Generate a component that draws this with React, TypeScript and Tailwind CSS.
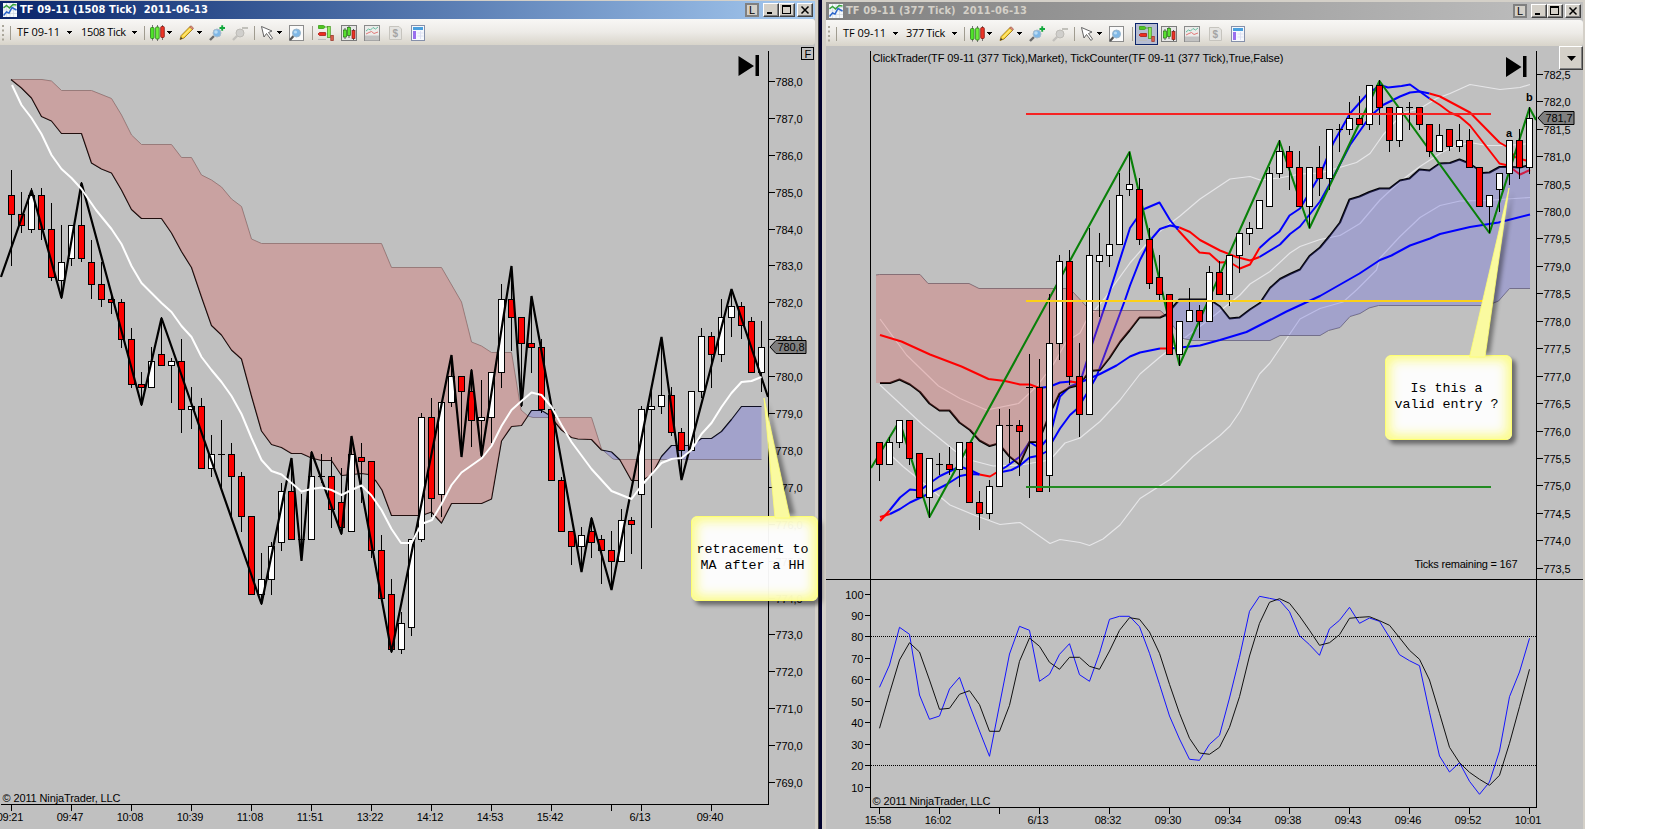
import React from "react";
import clsx from "clsx";

// [high, body top, body bottom, low, colour] in chart pixels
type Candle = [number, number, number, number, "r" | "w"];
type Tick = [number, string];

const leftCandles: Candle[] = [
  [170, 195.5, 214.5, 266, "r"], [192, 214.5, 225.5, 233, "r"], [188, 195.5, 229.5, 233, "w"],
  [188, 195.5, 229.5, 240, "r"], [203, 229.5, 277.5, 281, "r"], [225, 262.5, 280.5, 299, "w"],
  [225, 225.5, 258.5, 266, "w"], [182, 225.5, 258.5, 262, "r"], [240, 262.5, 284.5, 299, "r"],
  [262, 284.5, 299.5, 307, "r"], [292, 299.5, 302.5, 314, "r"], [299, 302.5, 339.5, 348, "r"],
  [328, 339.5, 384.5, 388, "r"], [372, 384.5, 387.5, 406, "r"], [347, 361.5, 387.5, 388, "w"],
  [317, 354.5, 365.5, 366, "r"], [358, 361.5, 365.5, 403, "w"], [339, 361.5, 409.5, 433, "r"],
  [387, 406.5, 409.5, 429, "w"], [398, 406.5, 468.5, 469, "r"], [435, 454.5, 468.5, 477, "w"],
  [420, 454.5, 454.5, 490, "w"], [443, 454.5, 476.5, 517, "r"], [472, 476.5, 516.5, 532, "r"],
  [516, 516.5, 594.5, 595, "r"], [553, 579.5, 594.5, 605, "w"], [542, 546.5, 579.5, 595, "w"],
  [483, 491.5, 542.5, 551, "w"], [458, 491.5, 539.5, 540, "r"], [494, 539.5, 539.5, 561, "w"],
  [451, 476.5, 539.5, 540, "w"], [454, 476.5, 476.5, 483, "w"], [457, 476.5, 509.5, 528, "r"],
  [468, 502.5, 527.5, 535, "r"], [436, 454.5, 531.5, 532, "w"], [443, 457.5, 461.5, 503, "r"],
  [461, 461.5, 550.5, 558, "r"], [535, 550.5, 598.5, 599, "r"], [579, 594.5, 649.5, 653, "r"],
  [612, 623.5, 649.5, 654, "w"], [539, 539.5, 627.5, 636, "w"], [413, 417.5, 539.5, 542, "w"],
  [398, 417.5, 498.5, 517, "r"], [402, 402.5, 494.5, 517, "w"], [355, 376.5, 402.5, 407, "w"],
  [376, 376.5, 391.5, 457, "r"], [369, 391.5, 420.5, 447, "r"], [380, 417.5, 420.5, 457, "w"],
  [372, 372.5, 417.5, 443, "w"], [284, 299.5, 372.5, 388, "w"], [266, 299.5, 317.5, 351, "r"],
  [317, 317.5, 343.5, 407, "r"], [296, 343.5, 347.5, 373, "r"], [339, 347.5, 409.5, 413, "r"],
  [409, 409.5, 480.5, 481, "r"], [477, 480.5, 531.5, 532, "r"], [531, 531.5, 546.5, 565, "r"],
  [527, 535.5, 546.5, 572, "w"], [517, 531.5, 542.5, 558, "r"], [535, 539.5, 550.5, 584, "r"],
  [531, 550.5, 561.5, 590, "r"], [509, 520.5, 561.5, 562, "w"], [517, 520.5, 524.5, 554, "r"],
  [406, 409.5, 494.5, 569, "w"], [387, 406.5, 409.5, 528, "w"], [337, 395.5, 406.5, 414, "w"],
  [387, 395.5, 432.5, 436, "r"], [428, 432.5, 450.5, 480, "r"], [391, 391.5, 450.5, 451, "w"],
  [328, 336.5, 391.5, 398, "w"], [332, 336.5, 354.5, 388, "r"], [299, 317.5, 354.5, 362, "w"],
  [289, 306.5, 317.5, 337, "w"], [302, 306.5, 325.5, 339, "r"], [317, 321.5, 372.5, 373, "r"],
  [321, 347.5, 372.5, 392, "w"],
];

const rightCandles: Candle[] = [
  [442, 442.5, 464.5, 481, "r"], [437, 442.5, 464.5, 465, "w"], [420, 420.5, 442.5, 448, "w"],
  [420, 420.5, 458.5, 465, "r"], [453, 453.5, 497.5, 498, "r"], [458, 458.5, 497.5, 518, "w"],
  [453, 464.5, 464.5, 475, "w"], [447, 464.5, 469.5, 475, "r"], [442, 442.5, 469.5, 487, "w"],
  [442, 442.5, 502.5, 503, "r"], [491, 502.5, 513.5, 530, "r"], [480, 486.5, 513.5, 519, "w"],
  [409, 425.5, 486.5, 487, "w"], [409, 425.5, 425.5, 463, "w"], [420, 425.5, 431.5, 476, "r"],
  [354, 387.5, 387.5, 498, "w"], [359, 387.5, 491.5, 492, "r"], [294, 343.5, 475.5, 492, "w"],
  [255, 261.5, 343.5, 360, "w"], [250, 261.5, 376.5, 385, "r"], [343, 376.5, 414.5, 437, "r"],
  [228, 255.5, 414.5, 415, "w"], [233, 255.5, 261.5, 317, "w"], [200, 244.5, 255.5, 267, "w"],
  [173, 195.5, 244.5, 245, "w"], [152, 184.5, 189.5, 196, "w"], [178, 189.5, 239.5, 245, "r"],
  [228, 239.5, 283.5, 289, "r"], [255, 277.5, 294.5, 300, "r"], [294, 294.5, 354.5, 355, "r"],
  [321, 321.5, 354.5, 366, "w"], [288, 310.5, 321.5, 322, "w"], [305, 310.5, 321.5, 338, "r"],
  [266, 272.5, 321.5, 322, "w"], [261, 272.5, 294.5, 295, "r"], [255, 255.5, 294.5, 306, "w"],
  [233, 233.5, 255.5, 273, "w"], [222, 228.5, 233.5, 245, "w"], [200, 200.5, 228.5, 229, "w"],
  [167, 173.5, 206.5, 207, "w"], [140, 151.5, 173.5, 178, "w"], [146, 151.5, 167.5, 190, "r"],
  [151, 167.5, 206.5, 207, "r"], [167, 167.5, 206.5, 228, "w"], [146, 167.5, 178.5, 196, "r"],
  [129, 129.5, 178.5, 190, "w"], [124, 129.5, 129.5, 152, "w"], [102, 118.5, 129.5, 135, "w"],
  [96, 118.5, 124.5, 125, "r"], [85, 85.5, 124.5, 130, "w"], [80, 85.5, 107.5, 125, "r"],
  [107, 107.5, 140.5, 152, "r"], [107, 107.5, 140.5, 147, "w"], [102, 107.5, 107.5, 130, "w"],
  [107, 107.5, 124.5, 130, "r"], [124, 124.5, 151.5, 157, "r"], [124, 135.5, 151.5, 152, "w"],
  [129, 129.5, 146.5, 151, "r"], [124, 140.5, 146.5, 152, "w"], [129, 140.5, 167.5, 168, "r"],
  [167, 167.5, 206.5, 207, "r"], [195, 195.5, 206.5, 233, "w"], [173, 173.5, 189.5, 212, "w"],
  [140, 140.5, 173.5, 185, "w"], [129, 140.5, 167.5, 179, "r"], [107, 118.5, 167.5, 174, "w"],
];

const leftZigzag =
  "1,277 31.5,190 61.5,298 81.5,183 141.5,405 161.5,318 261.5,604 291.5,458 301.5,561 311.5,452 341.5,534 351.5,436 391.5,652 451.5,355 461.5,457 471.5,370 481.5,456 511.5,266 521.5,406 531.5,296 581.5,572 591.5,518 611.5,590 661.5,337 681.5,480 731.5,289 763,382 768,397";
const leftAverage =
  "12,85 21.5,105 31.5,118 41.5,134 51.5,155 61.5,169 71.5,178 81.5,189 96,210 111.5,229 121.5,244 131.5,266 141.5,283 151.5,293 161.5,303 171.5,312 181.5,326 191.5,337 201.5,357 211.5,370 221.5,382 231.5,396 241.5,414 251.5,438 261.5,460 271.5,471 281.5,474.5 291.5,483 301.5,491.5 311.5,489 321.5,487.5 331.5,490 341.5,495 351.5,490 361.5,485.5 371.5,495.5 381.5,510 391.5,529 401,543 411.5,543 421.5,524 432,520 441.5,504 451.5,485 461.5,472.5 482,458 491.5,446 501.5,426 511.5,410 521.5,401 531.5,392.5 541.5,395 551.5,407 561.5,425 571.5,442 591.5,469 611.5,491 631.5,499 642,485 661.5,463 671.5,459 681.5,458 691.5,450 701.5,434 711.5,423 721.5,407 731.5,393 741.5,382 751.5,381 761.5,377";
const leftSpanA =
  "11,79.5 42,79.5 51.5,81 61.5,90.5 91.5,90.5 111.5,98.5 121.5,115 131.5,135 141.5,144.5 171.5,144.5 181.5,157.5 191.5,157.5 201.5,175 211.5,180 221.5,187 231.5,199 241.5,206.5 251.5,239 261.5,243.5 381.5,243.5 391.5,267.5 441.5,267.5 461.5,302 471.5,342 481.5,346 491.5,352.5 511.5,352.5 521,410 528,416 533,417.5 591.5,417.5 601.5,449 613,459 616,459.5 761.5,459.5";
const leftSpanB =
  "11,79.5 21.5,88 31.5,98 41.5,116.5 51.5,121 61.5,133.5 81.5,133.5 91.5,163 101.5,169 111.5,173 121.5,190 131.5,209.5 141.5,218.5 161.5,218.5 171.5,233 181.5,251.5 191.5,267.5 201.5,297 211.5,325.5 221.5,335 231.5,350 241.5,359 251.5,396 261.5,431 271.5,444.5 281.5,447.5 291.5,453.5 301.5,453.5 311.5,458 321.5,460.5 331.5,460.5 341.5,475.5 361.5,473.5 369,474.5 376,481 382,490 391.5,515.5 421.5,515.5 431.5,512 441.5,523 451.5,503.5 481.5,503.5 491.5,499 501.5,441 511.5,426.5 521.5,425.5 531.5,410.5 541.5,410.5 549,415 561.5,430 571.5,437.5 578,439 591.5,439.5 601.5,450 611.5,452 620,460 631.5,480.5 642,480.5 651.5,475 661.5,456.5 671.5,445.5 691.5,445.5 701.5,438.5 711.5,438.5 721.5,431.5 731.5,419.5 741.5,406.5 761.5,406.5";

const rightSpanA =
  "876,275 879.5,274.5 920,274.5 928,283.5 969,283.5 979,288.5 1066,288.5 1073,292 1086,306 1093,310.5 1160,310.5 1163,313 1183,338.5 1193,340.5 1270,340.5 1280,335.5 1320,335.5 1328.5,330.5 1340,327.5 1350,316.5 1360,313.5 1369,308 1378.5,305.5 1487,305.5 1498.5,301 1509.5,288.5 1530,288.5";
const rightSpanB =
  "880,383 890,383 899.5,379.5 910,384.5 920,392 929.5,403.5 939.5,410.5 949.5,410.5 959.5,422.5 970,430 979.5,440.5 989.5,446 998.5,443.5 1009.5,456.5 1019.5,464.5 1029.5,442 1038.5,442 1050,413 1059.5,393.5 1069.5,387.5 1079.5,385 1089.5,371 1100,370 1109.5,358 1120,342 1129.5,330.5 1139.5,317.5 1160,317.5 1166.5,314.5 1173.5,306.5 1179.5,299.5 1209.5,299.5 1220,306.5 1229.5,318.5 1239.5,317.5 1250,309.5 1260,303 1270,288 1280,279 1290,274 1300,269.5 1309.5,256 1320,247.5 1330,235.5 1340,222.5 1349.5,199.5 1359.5,196.5 1369.5,192 1379.5,188.5 1389.5,188.5 1400,180.5 1409.5,178.5 1419.5,169.5 1429.5,170.5 1439.5,163.5 1450,163 1459.5,159.5 1469.5,163.5 1483,173 1489.5,172.5 1499.5,167 1509.5,167 1520,167.5 1530,165";
const rightZigzag =
  "871,468 899.5,421 929.5,517 1129.5,152 1179.5,365 1279.5,141 1309.5,228 1379.5,81 1489.5,233 1529.5,108 1536,120";

const bands = [
  "880,319 906.5,355 938.5,386 960,398.5 986.5,410 1018.5,403.5 1036.5,386.5 1053,365 1066.5,341.5 1080,333 1086.5,320 1105,298 1113,286.5 1130,263 1153,236.5 1180,216 1200,199 1230,179 1250,176.5 1260,180 1279.5,178 1300,174 1320,173 1343,166.5 1356.5,162.5 1370,153.5 1383,135 1403,113 1420,108.5 1436.5,98.5 1450,93.5 1470,84.5 1500,89.5 1520,87.5 1530,84.5",
  "880,385 923,425 955,451 970,460 993,466 1020,465 1050,460 1065,443 1080,438 1100,421.5 1120,400 1140,374 1160,357 1180,341.5 1213,316.5 1240,295 1250,284 1270,271.5 1290,253 1300,246.5 1320,239.5 1340,235.5 1360,223.5 1380,200 1400,181.5 1420,166.5 1440,153.5 1453,146.5 1470,142.5 1487,145.5 1507,145.5 1530,143.5",
  "887,451.5 903,466.5 935,492.5 950,505 976.5,516 1000,524.5 1020,522.5 1050,543.5 1060,539.5 1080,542.5 1089.5,545.5 1103,539 1120,525 1140,498.5 1170,479.5 1193,456.5 1220,435.5 1230,426 1240,411.5 1259.5,374 1270,363 1300,319 1320,308.5 1343,302 1356.5,290 1376.5,270 1380,258 1400,236.5 1420,217.5 1440,205.5 1460,201 1487,200.5 1507,199 1530,197.5",
];

// moving averages change colour with their slope
const slowAverage: [string, string][] = [
  ["#f00", "880,335 901.5,341.5 930,354.5 961.5,366.5 988.5,379 1005,381 1020,384.5 1030,384.5 1039.5,388"],
  ["#00f", "1039.5,388 1050,386.5 1060,382.5 1071.5,381.5"],
  ["#f00", "1070,381.5 1081,383"],
  ["#00f", "1080,382.5 1100,374 1116.5,365.5 1130,356.5 1140,352.5 1160,348.5"],
  ["#f00", "1160,348.5 1170,348.5"],
  ["#00f", "1170,348.5 1200,345.5 1220,340 1246.5,332 1270,320 1286.5,311.5 1320,296 1359.5,273.5 1380,260 1391.5,255.5 1410,245.5 1430,238.5 1440,234 1470,227 1498.5,222.5 1530,214.5"],
];
const fastAverages: [string, string][] = [
  ["#f00", "880,521 889.5,510.5"],
  ["#00f", "889.5,510.5 900,497.5 910,489.5 920,490.5 930,483 940,476 960,466.5 970,470 979.5,474.5"],
  ["#f00", "979.5,474.5 990,476.5 996.5,472.5"],
  ["#00f", "996.5,472.5 1006.5,466.5 1019.5,457 1029.5,442 1039.5,448 1050,436 1060,396.5 1070,386.5 1080,382.5 1093,341.5 1107,300 1130,228 1143,209.5 1159.5,202.5 1170,220 1178,230"],
  ["#f00", "1178,230 1190,243 1199.5,252.5 1209.5,253.5 1219.5,262.5 1229.5,262 1240,268.5 1250,264.5 1259.5,248"],
  ["#00f", "1259.5,248 1270,238.5 1279.5,231.5 1289.5,215.5 1300,208.5 1320,175 1333,143.5 1350,113.5 1366.5,95 1380,85 1388,87.5 1401.5,86 1410,84.5 1429.5,98.5"],
  ["#f00", "1429.5,98.5 1440,105 1450,112.5 1459.5,116.5 1470,125.5 1499.5,163.5 1508,165.5 1520,174.5 1530,170"],
  ["#f00", "880,517 890,514"],
  ["#00f", "890,514 900,509 910,502.5 923,496.5 946.5,484.5 960,476 970,474 979.5,474.5"],
  ["#00f", "996.5,473 1011.5,470 1020,465.5 1029.5,457.5 1039.5,455.5 1046.5,451.5 1060,428.5 1070,415 1078,408 1086.5,394 1096.5,376.5 1125,300 1130,285.5 1140,260 1150,240.5 1160,229 1170,225.5 1179.5,227.5"],
  ["#f00", "1179.5,227.5 1190,232 1200,240 1220,250.5 1236.5,257 1250,260.5 1259.5,257"],
  ["#00f", "1259.5,257 1280,244.5 1290,234 1300,226.5 1320,201.5 1330,183.5 1350,145 1370,116.5 1383,105 1400,96.5 1410,92.5 1420,91.5 1429.5,93.5"],
  ["#f00", "1429.5,93.5 1440,96.5 1470,112.5 1499.5,142.5 1506.5,146.5 1515,157 1526,160.5 1530,161"],
];

const stochK = [
  687.3, 665, 627.3, 634.3, 695, 719.3, 716, 689, 677.3, 705, 731, 756.3, 705, 654, 626.3, 630.3, 681.3, 674.3,
  654.3, 643.7, 674.7, 681.3, 653.3, 619.3, 616.3, 616.3, 626.7, 653.3, 684.3, 716, 739, 759.3, 760.3, 744.3,
  735.3, 698, 657.3, 611.3, 596.3, 598.3, 600.3, 611.7, 635.7, 644.7, 655.3, 628.7, 620.3, 607.3, 623.3, 618,
  621.3, 637.3, 654.7, 660.7, 665.7, 712.3, 756, 772, 762.7, 781.3, 794.3, 782, 751, 696.7, 672, 638.3,
];
const stochD = [
  728.3, 693.3, 660, 642.7, 652, 680, 709.3, 708.3, 694.3, 690.7, 704.7, 731.3, 731.3, 705.3, 661.3, 638, 646.3,
  662.3, 669.3, 657.3, 657.3, 666.3, 669.3, 651, 630.3, 617.7, 619.3, 632, 653.3, 684.3, 713.3, 738.3, 753,
  754.3, 747.3, 727.3, 696.7, 656, 623.3, 602.3, 598.7, 603.3, 616, 630.3, 645.3, 642.7, 634.7, 618.3, 617.3,
  616.7, 620.7, 625.3, 637.7, 650.3, 659.3, 680, 713.3, 747.3, 762.7, 772.3, 779.3, 785.3, 775.3, 743.3,
  706.7, 669.3,
];

const leftTimes: Tick[] = [
  [11.5, "09:21"], [71.5, "09:47"], [131.5, "10:08"], [191.5, "10:39"], [251.5, "11:08"], [311.5, "11:51"],
  [371.5, "13:22"], [431.5, "14:12"], [491.5, "14:53"], [551.5, "15:42"], [611.5, ""], [641.5, "6/13"],
  [711.5, "09:40"],
];
const rightTimes: Tick[] = [
  [879.5, "15:58"], [939.5, "16:02"], [999.5, ""], [1039.5, "6/13"], [1109.5, "08:32"], [1169.5, "09:30"],
  [1229.5, "09:34"], [1289.5, "09:38"], [1349.5, "09:43"], [1409.5, "09:46"], [1469.5, "09:52"], [1529.5, "10:01"],
];
const stochTicks: Tick[] = [
  [594.5, "100"], [615.5, "90"], [636.5, "80"], [658.5, "70"], [679.5, "60"], [701.5, "50"], [722.5, "40"],
  [744.5, "30"], [765.5, "20"], [787.5, "10"],
];

const labelClass = "fill-black font-['Liberation_Sans',Arial,sans-serif] text-[11px]";

const parse = (pts: string) => pts.split(" ").map((p) => p.split(",").map(Number));

const valueAt = (pts: number[][], x: number) => {
  if (x <= pts[0][0]) return pts[0][1];
  for (let i = 1; i < pts.length; i++) {
    const [x0, y0] = pts[i - 1];
    const [x1, y1] = pts[i];
    if (x <= x1) return y0 + ((y1 - y0) * (x - x0)) / (x1 - x0);
  }
  return pts[pts.length - 1][1];
};

// Ichimoku cloud: red while span A is on top, blue when span B is
const Cloud = ({ a, b, from, to }: { a: string; b: string; from: number; to: number }) => {
  const spanA = parse(a);
  const spanB = parse(b);
  const top: string[] = [];
  const under: string[] = [];
  const over: string[] = [];
  for (let x = from; x <= to; x += 0.5) {
    const ya = valueAt(spanA, x);
    const yb = valueAt(spanB, x);
    top.push(`${x},${ya}`);
    under.unshift(`${x},${Math.max(ya, yb)}`);
    over.unshift(`${x},${Math.min(ya, yb)}`);
  }
  return (
    <g stroke="none">
      <polygon points={[...top, ...under].join(" ")} fill="rgba(222,92,89,0.3)" />
      <polygon points={[...top, ...over].join(" ")} fill="rgba(92,92,229,0.3)" />
    </g>
  );
};

const Line = ({ points, color, width = 1 }: { points: string; color: string; width?: number }) => (
  <polyline points={points} fill="none" stroke={color} strokeWidth={width} strokeLinejoin="round" />
);

const Candles = ({ data, start }: { data: Candle[]; start: number }) => (
  <g stroke="#000" shapeRendering="crispEdges">
    {data.map(([high, top, bottom, low, color], i) => {
      const x = start + i * 10;
      return (
        <g key={i}>
          <line x1={x} x2={x} y1={high} y2={low} />
          {top === bottom ? (
            <line x1={x - 3.5} x2={x + 3.5} y1={top} y2={top} />
          ) : (
            <rect x={x - 3} y={top} width={6} height={bottom - top} fill={color === "r" ? "#fc0000" : "#fff"} />
          )}
        </g>
      );
    })}
  </g>
);

const PriceTag = ({ x, y, label }: { x: number; y: number; label: string }) => (
  <g>
    <path d={`M${x} ${y}l6 -6.5h30v13h-30z`} fill="#808080" stroke="#000" />
    <text x={x + 7.5} y={y + 4} className={labelClass} textLength={27}>
      {label}
    </text>
  </g>
);

const TimeAxis = ({ ticks, y, from, to }: { ticks: Tick[]; y: number; from: number; to: number }) => (
  <g>
    <path d={`M${from} ${y}H${to}`} stroke="#000" shapeRendering="crispEdges" />
    {ticks.map(([x, label]) => (
      <g key={x}>
        <path d={`M${x} ${y}v6`} stroke="#000" shapeRendering="crispEdges" />
        {label && (
          <text
            x={x - 1.5}
            y={y + 16.5}
            textAnchor="middle"
            className={labelClass}
            textLength={label.length === 5 ? 26.5 : 21}
          >
            {label}
          </text>
        )}
      </g>
    ))}
  </g>
);

const PlayEnd = ({ x, y }: { x: number; y: number }) => (
  <path d={`M${x} ${y}l15.5 10l-15.5 10zM${x + 17} ${y - 1}h3.5v21h-3.5z`} fill="#000" />
);

const priceTicks = (first: number, step: number, count: number, y: number, dy: number): Tick[] =>
  Array.from({ length: count }, (_, i) => [
    Math.floor(y + i * dy) + 0.5,
    (first - i * step).toFixed(1).replace(".", ","),
  ]);

const PriceAxis = ({ x, ticks, bottom }: { x: number; ticks: Tick[]; bottom: number }) => (
  <g>
    <path d={`M${x} 51V${bottom}`} stroke="#000" shapeRendering="crispEdges" />
    {ticks.map(([y, label]) => (
      <g key={label}>
        <path d={`M${x} ${y}h6.5`} stroke="#000" shapeRendering="crispEdges" />
        <text x={x + 7} y={y + 4.5} className={labelClass} textLength={27}>
          {label}
        </text>
      </g>
    ))}
  </g>
);

const LeftChart = () => (
  <svg className="block" width={815} height={784} viewBox="0 45 815 784">
    <Line points={leftSpanA} color="#8c8080" />
    <Line points={leftSpanB} color="#000" width={1.2} />
    <Cloud a={leftSpanA} b={leftSpanB} from={11} to={761.5} />
    <Candles data={leftCandles} start={11.5} />
    <polyline points={leftZigzag} fill="none" stroke="#000" strokeWidth={2.2} strokeLinejoin="bevel" />
    <Line points={leftAverage} color="#fff" width={2} />
    <PriceAxis x={768.5} ticks={priceTicks(788, 1, 20, 81.4, 36.9)} bottom={805} />
    <PriceTag x={770} y={347} label="780,8" />
    <TimeAxis ticks={leftTimes} y={804.5} from={1} to={769} />
    <text x={2.5} y={801.5} className={labelClass} textLength={118}>
      © 2011 NinjaTrader, LLC
    </text>
    <PlayEnd x={738.5} y={56} />
    <rect x={801.5} y={47.5} width={12} height={12} fill="none" stroke="#000" />
    <text x={804.5} y={57.5} className={labelClass}>
      F
    </text>
  </svg>
);

const stochPoints = (values: number[]) => values.map((v, i) => `${879.5 + i * 10},${v}`).join(" ");

const RightChart = () => (
  <svg className="block" width={757} height={783} viewBox="826 46 757 783">
    {bands.map((b) => (
      <Line key={b} points={b} color="#e6e6e8" width={1.2} />
    ))}
    <Line points={rightSpanA} color="#77727c" />
    {fastAverages.map(([color, pts]) => (
      <Line key={pts} points={pts} color={color} width={2} />
    ))}
    <Line points={rightSpanB} color="#000" width={2} />
    <Cloud a={rightSpanA} b={rightSpanB} from={876} to={1530} />
    {slowAverage.map(([color, pts]) => (
      <Line key={pts} points={pts} color={color} width={2} />
    ))}
    <Line points={rightZigzag} color="#088008" width={2.1} />
    <Candles data={rightCandles} start={879.5} />
    <path d="M1026 114H1491" stroke="#f62222" strokeWidth={2} />
    <path d="M1026 301H1488" stroke="#fcd016" strokeWidth={2} />
    <path d="M1026 487H1491" stroke="#228b22" strokeWidth={2} />
    <text x={872.5} y={62} className={labelClass} textLength={411}>
      ClickTrader(TF 09-11 (377 Tick),Market), TickCounter(TF 09-11 (377 Tick),True,False)
    </text>
    <text x={1506} y={137} className={clsx(labelClass, "font-bold")}>
      a
    </text>
    <text x={1526} y={101} className={clsx(labelClass, "font-bold")}>
      b
    </text>
    <text x={1414.5} y={567.5} className={labelClass} textLength={103}>
      Ticks remaining = 167
    </text>
    <PriceAxis x={1536.5} ticks={priceTicks(782.5, 0.5, 19, 74.2, 27.45)} bottom={808} />
    <PriceTag x={1538} y={118} label="781,7" />
    <path d="M826 579.5H1583M870.5 51V807" stroke="#000" shapeRendering="crispEdges" />
    <path d="M871 636.5H1536M871 765.5H1536" stroke="#000" strokeDasharray="1 1" shapeRendering="crispEdges" />
    {stochTicks.map(([y, label]) => (
      <g key={label}>
        <path d={`M865 ${y}h5`} stroke="#000" shapeRendering="crispEdges" />
        <text x={863.5} y={y + 4.5} textAnchor="end" className={labelClass}>
          {label}
        </text>
      </g>
    ))}
    <Line points={stochPoints(stochK)} color="#1414ff" />
    <Line points={stochPoints(stochD)} color="#111" />
    <TimeAxis ticks={rightTimes} y={807.5} from={870} to={1537} />
    <text x={872.5} y={804.5} className={labelClass} textLength={118}>
      © 2011 NinjaTrader, LLC
    </text>
    <PlayEnd x={1506} y={57} />
  </svg>
);

/* toolbar icons */

const Caret = ({ className }: { className?: string }) => (
  <svg className={clsx("shrink-0", className)} width={5} height={3} viewBox="0 0 5 3" shapeRendering="crispEdges">
    <path d="M0 0h5v1h-1v1h-1v1h-1v-1h-1v-1h-1z" fill="#000" />
  </svg>
);

const Separator = ({ className }: { className?: string }) => (
  <span className={clsx("h-[14px] w-px shrink-0 bg-[#a09c90]", className)} />
);

const Icon = ({ w = 16, className, children }: { w?: number; className?: string; children: React.ReactNode }) => (
  <svg className={clsx("shrink-0", className)} width={w} height={16} viewBox={`0 0 ${w} 16`}>
    {children}
  </svg>
);

const CandleBars = () => (
  <g strokeWidth={0.8}>
    <path d="M2.5 0v15.5M7.5 0v16M12.5 0v15" stroke="#555" />
    <rect x={0.5} y={2.5} width={3.6} height={11} rx={1} fill="#4fe32a" stroke="#2c7a18" />
    <rect x={5.6} y={2} width={3.6} height={12} rx={1} fill="#6cf03c" stroke="#2c7a18" />
    <rect x={10.7} y={1.5} width={3.6} height={11} rx={1} fill="#ee3426" stroke="#7e1b14" />
  </g>
);

const Magnifier = ({ muted }: { muted?: boolean }) => (
  <g>
    <path d="M1 15L5 11" stroke={muted ? "#c2c0bc" : "#6b6b6b"} strokeWidth={2.4} />
    <circle cx={8} cy={8} r={4} fill={muted ? "#d0cfcc" : "#7fb7e6"} stroke={muted ? "#bdbbb6" : "#a9bccb"} />
    {!muted && <circle cx={7} cy={7} r={1.8} fill="#b9dcf6" />}
  </g>
);

const DomIcon = () => (
  <Icon>
    <path d="M0.500 0.500h5l2 1.500l-2 1.500h-5zM8 2h2" fill="#4fc820" stroke="#3a9a18" strokeWidth={0.8} />
    <path d="M0 9l1.500-1.500h6v3h-6z" fill="#ee2c20" stroke="#a51d15" strokeWidth={0.8} />
    <path d="M8 9h2M0 14.500h8" stroke="#bbb" />
    <rect x={9.500} y={1.500} width={2.800} height={11} fill="#8df05a" stroke="#4c9c28" strokeWidth={0.8} />
    <rect x={12.800} y={10.500} width={2.500} height={5} fill="#e0604e" stroke="#9b3a2e" strokeWidth={0.8} />
  </Icon>
);

const Toolbar = ({ interval, domActive }: { interval: string; domActive?: boolean }) => (
  <div className="flex h-[26px] shrink-0 items-center rounded-r-[3px] bg-linear-to-b from-[#f8f7f5] via-[#edebe7] to-[#d8d4ca] pt-px font-['Open_Sans','Noto_Sans',sans-serif] text-[11px] text-black">
    <svg className="ml-[2px] shrink-0" width={3} height={16} viewBox="0 0 3 16">
      <path d="M1 0v2M1 4.500v2M1 9v2M1 13.500v2" stroke="#aaa69a" strokeWidth={2} />
    </svg>
    <Separator className="ml-[5px]" />
    <span className="ml-[6px] w-[44px] whitespace-nowrap tracking-[-0.05px]">TF 09-11</span>
    <Caret className="ml-[6px]" />
    <span
      className={clsx(
        "whitespace-nowrap tracking-[-0.35px]",
        domActive ? "ml-[8px] w-[41px]" : "ml-[9px] w-[46px]"
      )}
    >
      {interval}
    </span>
    <Caret className="ml-[5px]" />
    <Separator className="ml-[7px]" />
    <Icon w={15} className="ml-[5px]">
      <CandleBars />
    </Icon>
    <Caret className="ml-[2px]" />
    <Icon w={15} className="ml-[7px]">
      <path d="M1 14.500L2.200 10.500L11 1.500L14 4L5 13z" fill="#fbd63c" stroke="#a07818" strokeWidth={0.9} />
      <path d="M1 14.500L2 12L3.500 13.500z" fill="#333" />
      <path d="M10.500 2L12 0.800L14.500 3L13.500 4.500z" fill="#e88a78" stroke="#95604d" strokeWidth={0.7} />
      <path d="M4 11.500L11.800 3.500" stroke="#fff2a4" />
    </Icon>
    <Caret className="ml-[3px]" />
    <Icon className="ml-[7px]">
      <Magnifier />
      <path d="M10.500 3h5.500M13.200 0.300v5.500" stroke="#12a83c" strokeWidth={1.900} />
    </Icon>
    <Icon className="ml-[7px]">
      <Magnifier muted />
      <path d="M10 3h6" stroke="#bcbab5" strokeWidth={1.800} />
    </Icon>
    <Separator className="ml-[6px]" />
    <Icon w={12} className="ml-[6px]">
      <path d="M0.500 1.500L3 12L5.500 8.500L10 14.500L11.500 13L7.500 7.500L11 6z" fill="#fff" stroke="#555" strokeWidth={0.9} />
    </Icon>
    <Caret className="ml-[4px]" />
    <Icon w={15} className="ml-[7px]">
      <rect x={0.500} y={0.500} width={14} height={15} fill="#fafafa" stroke="#8c8c8c" />
      <path d="M1 15L4.500 11" stroke="#555" strokeWidth={2.200} />
      <circle cx={7.500} cy={8} r={4} fill="#7fb7e6" stroke="#9ab6cc" />
      <circle cx={6.500} cy={7} r={1.600} fill="#b9dcf6" />
    </Icon>
    <Separator className="ml-[8px]" />
    {domActive ? (
      <span className="mr-[-4px] ml-[2px] flex h-[22px] w-[23px] shrink-0 items-center justify-center border border-[#0a246a] bg-[#b6bdd2]">
        <DomIcon />
      </span>
    ) : (
      <span className="ml-[5px] flex shrink-0">
        <DomIcon />
      </span>
    )}
    <Icon className="ml-[7px]">
      <rect x={0.500} y={0.500} width={15} height={15} fill="#e6e6e6" stroke="#7c7c7c" />
      <path d="M4 3v11M8 1v12M12.500 4v11" stroke="#333" strokeWidth={0.8} />
      <rect x={2.500} y={5} width={3} height={7} fill="#58e030" stroke="#23750f" strokeWidth={0.7} />
      <rect x={6.500} y={2.500} width={3} height={8} fill="#58e030" stroke="#23750f" strokeWidth={0.7} />
      <rect x={11} y={5.500} width={3} height={8} fill="#ee3426" stroke="#7e1b14" strokeWidth={0.7} />
    </Icon>
    <Icon className="ml-[7px]">
      <rect x={0.500} y={0.500} width={15} height={15} fill="#ececea" stroke="#8a8a8a" />
      <path d="M1 10.500h14v5h-14z" fill="#c2c2c2" />
      <path d="M2 6L4.500 4L6.500 5L9 2.500L11.500 4L14 2" fill="none" stroke="#58b898" strokeWidth={0.9} />
      <path d="M2 9L5 7.500L7.500 6.500L10 8.500L14 7" fill="none" stroke="#e06a6a" strokeWidth={0.9} />
    </Icon>
    <Icon w={13} className="ml-[9px]">
      <path d="M0.500 1.500h9.500l2.500 2.500v10.500h-12z" fill="#e4e3e0" stroke="#c6c4be" />
      <text x={3.500} y={12} className="fill-[#a4a4a4] font-['Liberation_Sans',Arial,sans-serif] text-[10px] font-bold">
        $
      </text>
    </Icon>
    <Icon w={14} className="ml-[9px]">
      <rect x={0.500} y={0.500} width={13} height={15} fill="#f6f8fd" stroke="#8590aa" />
      <rect x={2} y={2} width={10} height={3} fill="#4aa0de" />
      <rect x={2} y={6} width={3} height={8} fill="#9a70ee" />
      <path d="M6.500 8h6M6.500 11h6M9.500 6v8" stroke="#d8dcf0" strokeWidth={0.8} />
    </Icon>
  </div>
);

const WinButton = ({ className, children }: { className?: string; children: React.ReactNode }) => (
  <span
    className={clsx(
      "flex h-[14px] w-[16px] items-center justify-center border border-t-white border-l-white border-r-[#404040] border-b-[#404040] bg-[#d4d0c8] shadow-[inset_-1px_-1px_0_#808080]",
      className
    )}
  >
    <svg width={12} height={10} viewBox="0 0 12 10" fill="none" stroke="#000" shapeRendering="crispEdges">
      {children}
    </svg>
  </span>
);

const TitleBar = ({ title, active }: { title: string; active?: boolean }) => (
  <div
    className={clsx(
      "flex h-[18px] shrink-0 items-center pr-[2px] pl-[3px]",
      active
        ? "bg-linear-to-r from-[#0a246a] to-[#a6caf0] text-white"
        : "bg-linear-to-r from-[#808080] to-[#c0c0c0] text-[#d4d0c8]"
    )}
  >
    <svg className="shrink-0" width={14} height={14} viewBox="0 0 14 14">
      <rect width={14} height={14} fill="#f4f8fb" />
      <path d="M3.500 0v14M7 0v14M10.500 0v14M0 3.500h14M0 7h14M0 10.500h14" stroke="#c9d4de" strokeWidth={0.6} />
      <path d="M0.500 5L3.500 2.500L6.500 5L10 1.500L13.500 2" fill="none" stroke="#37a33a" strokeWidth={1.500} />
      <path d="M0.500 12.500L3.500 9L6 10L9 4.500L13.500 7" fill="none" stroke="#2b66cc" strokeWidth={1.500} />
    </svg>
    <span className="ml-[3px] font-['DejaVu_Sans_Condensed','DejaVu_Sans',sans-serif] text-[11px] font-bold tracking-[0.1px] whitespace-pre">
      {title}
    </span>
    <span className="mr-[4px] ml-auto flex h-[14px] w-[14px] items-center justify-center border-2 border-[#808080] bg-[#d4d0c8] font-['Liberation_Sans',Arial,sans-serif] text-[11px] leading-none text-black">
      L
    </span>
    <WinButton>
      <path d="M2 8h5" strokeWidth={2} />
    </WinButton>
    <WinButton>
      <path d="M1.500 1v7.500h8V1" />
      <path d="M1 1h9" strokeWidth={2} />
    </WinButton>
    <WinButton className="ml-[2px]">
      <path d="M2.500 1.500l7 7M9.500 1.500l-7 7" strokeWidth={1.500} shapeRendering="auto" />
    </WinButton>
  </div>
);

type CalloutProps = {
  className: string;
  lines: string[];
};

const Callout = ({ className, lines }: CalloutProps) => (
  <div
    className={clsx(
      "absolute flex h-[85px] w-[127px] flex-col items-center justify-center rounded-[6px] border border-[#ffff70] bg-white/95 pr-[4px] pb-[2px] font-['Liberation_Mono','Courier_New',monospace] text-[13.33px] leading-4 whitespace-pre text-black shadow-[inset_0_0_12px_4px_#fbfb84,4px_4px_4px_rgba(0,0,0,0.45)]",
      className
    )}
  >
    {lines.map((line) => (
      <span key={line}>{line}</span>
    ))}
  </div>
);

const App: React.FC = () => {
  return (
    <div className="relative flex h-[829px] w-[1660px] overflow-hidden bg-white">
      <section className="flex w-[818px] shrink-0 flex-col border-t border-r-[3px] border-[#d4d0c8] bg-[#c0c0c0]">
        <TitleBar title="TF 09-11 (1508 Tick)  2011-06-13" active />
        <Toolbar interval="1508 Tick" />
        <LeftChart />
      </section>

      <div className="w-[5px] shrink-0 border-r border-l border-l-[#404040] border-r-[#d4d0c8] bg-[#02022e]" />

      <section className="relative flex w-[762px] shrink-0 flex-col border-t-2 border-r-2 border-l-[3px] border-[#d4d0c8] bg-[#c0c0c0]">
        <TitleBar title="TF 09-11 (377 Tick)  2011-06-13" />
        <Toolbar interval="377 Tick" domActive />
        <RightChart />
        <button className="absolute top-[44px] right-0 flex h-[24px] w-[24px] items-center justify-center border border-t-white border-l-white border-r-[#404040] border-b-[#404040] bg-[#d4d0c8] shadow-[inset_-1px_-1px_0_#808080]">
          <svg width={9} height={5} viewBox="0 0 9 5">
            <path d="M0 0h9l-4.500 5z" fill="#000" />
          </svg>
        </button>
      </section>

      <Callout className="top-[516px] left-[691px]" lines={["retracement to", "MA after a HH"]} />
      <Callout className="top-[355px] left-[1385px]" lines={["Is this a", "valid entry ?"]} />

      {/* callout pointers */}
      <svg className="absolute inset-0" width={1660} height={829} viewBox="0 0 1660 829">
        <defs>
          <filter id="soft" x="-50%" y="-10%" width="200%" height="120%">
            <feGaussianBlur stdDeviation={2} />
          </filter>
        </defs>
        <path d="M768 402L779 515H795z" fill="#000" opacity={0.4} filter="url(#soft)" />
        <path d="M764 398L775 518H790z" fill="#fafaa0" stroke="#ffff70" strokeWidth={0.8} />
        <path d="M1513 192L1474 354H1490z" fill="#000" opacity={0.4} filter="url(#soft)" />
        <path d="M1509 188L1469.500 357H1485z" fill="#fafaa0" stroke="#ffff70" strokeWidth={0.8} />
      </svg>
    </div>
  );
};

export default App;
